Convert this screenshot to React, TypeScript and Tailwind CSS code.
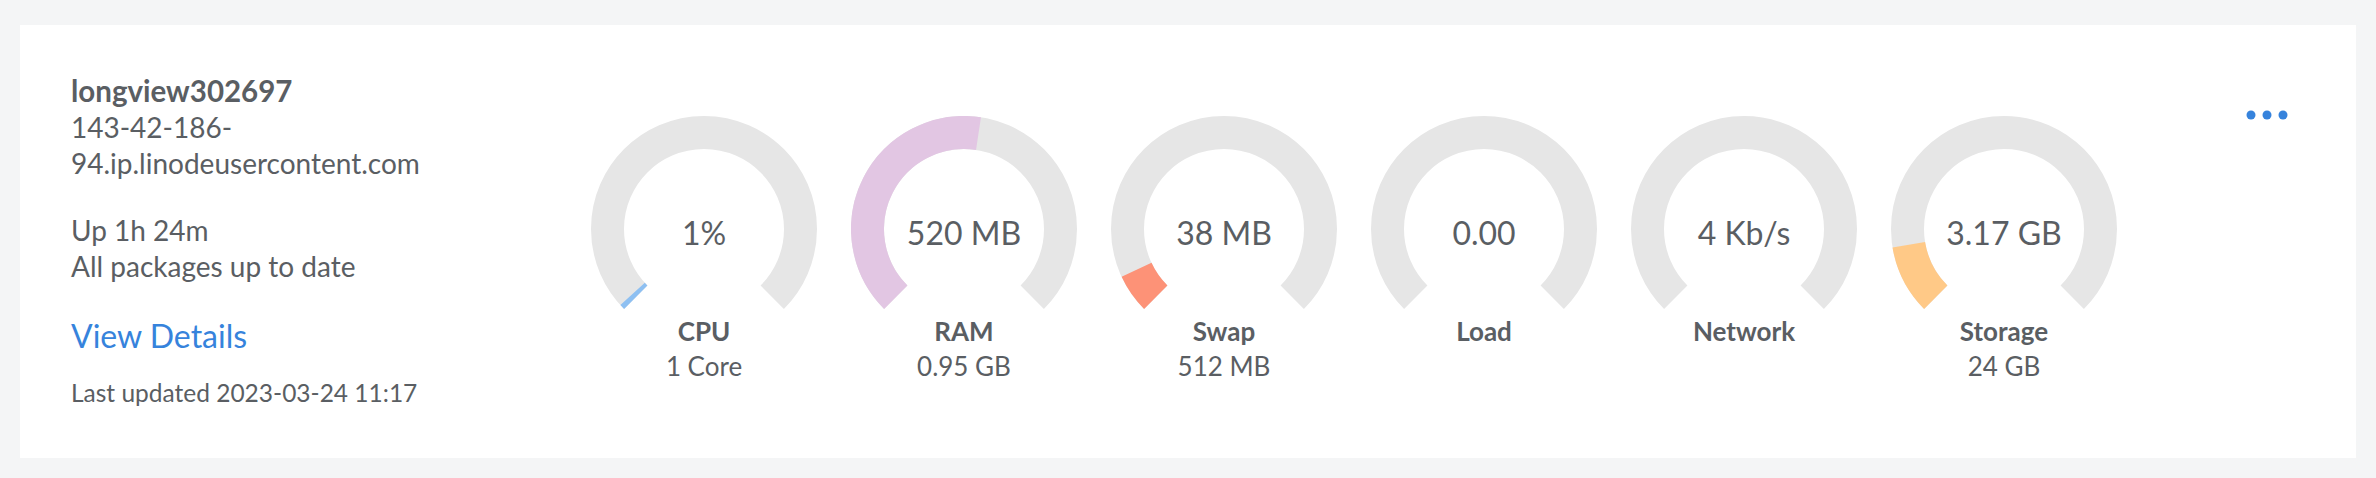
const font = { fontFamily: "Lato, 'Open Sans', sans-serif" };

type Gauge = {
  value: string;
  label: string;
  sub?: string;
  fraction: number;
  color: string;
};

const gauges: Gauge[] = [
  { value: "1%", label: "CPU", sub: "1 Core", fraction: 0.01, color: "#8ec0f2" },
  { value: "520 MB", label: "RAM", sub: "0.95 GB", fraction: 0.532, color: "#e2c6e3" },
  { value: "38 MB", label: "Swap", sub: "512 MB", fraction: 0.074, color: "#fd9277" },
  { value: "0.00", label: "Load", fraction: 0, color: "#e6e6e6" },
  { value: "4 Kb/s", label: "Network", fraction: 0, color: "#e6e6e6" },
  { value: "3.17 GB", label: "Storage", sub: "24 GB", fraction: 0.132, color: "#ffc987" },
];

function point(cx: number, cy: number, r: number, deg: number) {
  const a = (deg * Math.PI) / 180;
  return [cx + r * Math.sin(a), cy - r * Math.cos(a)];
}

function arc(from: number, to: number) {
  const cx = 113, cy = 113, r = 96.5;
  const [x1, y1] = point(cx, cy, r, from);
  const [x2, y2] = point(cx, cy, r, to);
  const large = to - from > 180 ? 1 : 0;
  return `M ${x1} ${y1} A ${r} ${r} 0 ${large} 1 ${x2} ${y2}`;
}

function GaugeItem({ g }: { g: Gauge }) {
  return (
    <div className="flex w-[260px] flex-col items-center">
      <div className="relative h-[198px] w-[226px]">
        <svg width="226" height="198" viewBox="0 0 226 198">
          <path d={arc(-135, 135)} fill="none" stroke="#e6e6e6" strokeWidth="33" />
          {g.fraction > 0 && (
            <path d={arc(-135, -135 + 270 * g.fraction)} fill="none" stroke={g.color} strokeWidth="33" />
          )}
        </svg>
        <div className="absolute left-0 top-[101px] w-full text-center text-[32px] leading-[32px] text-[#5a5e63]">
          {g.value}
        </div>
      </div>
      <div className="text-[26px] font-bold leading-[35px] text-[#5a5e63]">{g.label}</div>
      {g.sub && <div className="text-[26px] leading-[35px] text-[#5a5e63]">{g.sub}</div>}
    </div>
  );
}

export default function App() {
  return (
    <div className="h-[478px] w-full bg-[#f4f5f6] px-[20px] pt-[25px]" style={font}>
      <div className="flex h-[433px] bg-white pl-[51px] pt-[48px] text-[#5a5e63]">
        <div className="w-[503px] shrink-0">
          <p className="text-[29.5px] font-bold leading-[36px]">longview302697</p>
          <p className="text-[28px] leading-[36px]">143-42-186-</p>
          <p className="text-[28px] leading-[36px]">94.ip.linodeusercontent.com</p>
          <p className="mt-[31px] text-[28px] leading-[36px]">Up 1h 24m</p>
          <p className="text-[28px] leading-[36px]">All packages up to date</p>
          <a className="mt-[33px] block text-[32px] leading-[38px] text-[#3683dc]">View Details</a>
          <p className="mt-[22px] text-[24.5px] leading-[32px]">Last updated 2023-03-24 11:17</p>
        </div>
        <div className="mt-[43px] flex">
          {gauges.map((g) => (
            <GaugeItem key={g.label} g={g} />
          ))}
        </div>
        <div className="flex flex-1 justify-end pr-[68px] pt-[27px]">
          <button className="h-[30px]">
            <svg width="42" height="10" viewBox="0 0 42 10">
              <circle cx="5" cy="5" r="4.5" fill="#3683dc" />
              <circle cx="21" cy="5" r="4.5" fill="#3683dc" />
              <circle cx="37" cy="5" r="4.5" fill="#3683dc" />
            </svg>
          </button>
        </div>
      </div>
    </div>
  );
}
